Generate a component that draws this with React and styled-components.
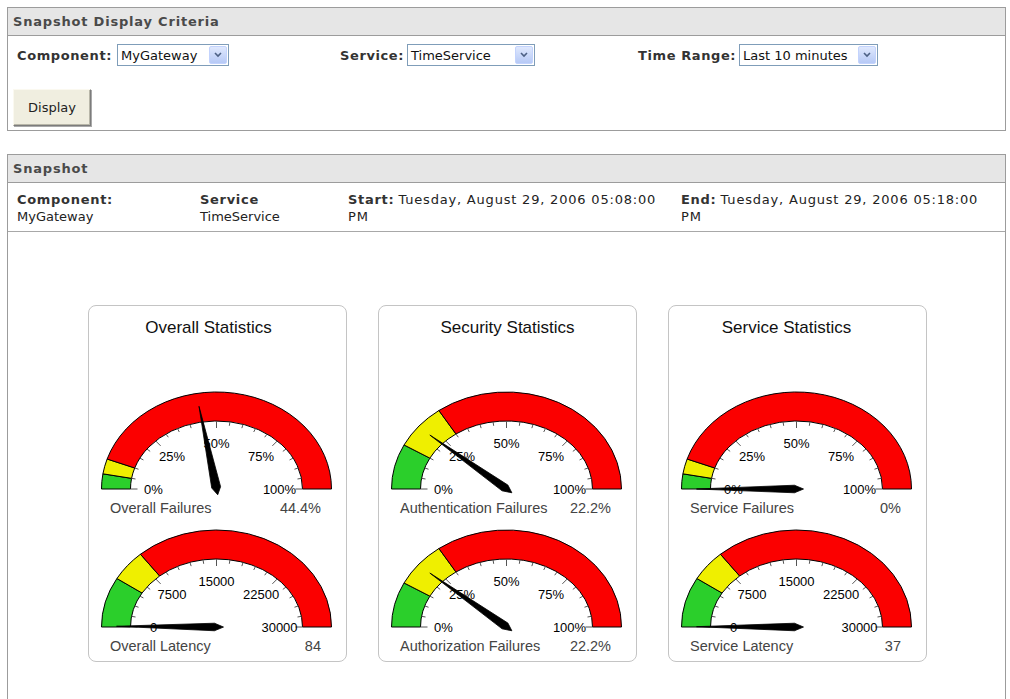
import React from 'react'
import styled, { createGlobalStyle } from 'styled-components'

const GlobalStyle = createGlobalStyle`
  body {
    margin: 0;
    background: #fff;
    font-family: Verdana, "DejaVu Sans", sans-serif;
    color: #222;
  }
  b {
    letter-spacing: 0.7px;
  }
`

const Page = styled.div`
  padding: 7px 0 0 7px;
  width: 999px;
`

const Panel = styled.section`
  border: 1px solid #9c9c9c;
  margin-top: ${p => p.$top || 0}px;
`

const PanelHeader = styled.div`
  height: 27px;
  line-height: 27px;
  background: #e6e6e6;
  border-bottom: 1px solid #9c9c9c;
  padding-left: 5px;
  font-size: 13px;
  font-weight: bold;
  letter-spacing: 0.8px;
  color: #4a4a4a;
`

const CriteriaBody = styled.div`
  padding: 8px 0 4px 5px;
`

const CriteriaRow = styled.div`
  display: flex;
  align-items: center;
  height: 22px;
  padding-left: 4px;
  margin-bottom: 23px;
`

const Field = styled.div`
  display: flex;
  align-items: center;
  gap: 5px;
  width: ${p => (p.$width ? `${p.$width}px` : 'auto')};
`

const Label = styled.span`
  width: ${p => p.$width}px;
  font-size: 13px;
  font-weight: bold;
  letter-spacing: 0.6px;
  white-space: nowrap;
  color: #333;
`

const SelectBox = styled.div`
  box-sizing: border-box;
  width: ${p => p.$width}px;
  height: 22px;
  border: 1px solid #7f9db9;
  display: flex;
  align-items: center;
  justify-content: space-between;
  padding: 0 1px 0 3px;
  font-size: 13px;
  color: #111;
  background: #fff;
`

const SelectArrow = styled.span`
  box-sizing: border-box;
  width: 18px;
  height: 18px;
  border: 1px solid #c3d3fd;
  border-radius: 2px;
  background: linear-gradient(#dfe8fd, #b6c9f6);
  display: flex;
  align-items: center;
  justify-content: center;
`

const Button = styled.button`
  box-sizing: border-box;
  width: 78px;
  height: 37px;
  background: #f0eee0;
  border: 1px solid;
  border-color: #fbf9f0 #7c7c7c #7c7c7c #fbf9f0;
  box-shadow: 1px 1px 0 #a9a9a9, inset -1px -1px 0 #b8b6a8;
  font-family: Verdana, "DejaVu Sans", sans-serif;
  font-size: 13px;
  color: #222;
  padding: 0;
  display: block;
`

const InfoRow = styled.div`
  display: grid;
  grid-template-columns: 183px 148px 333px 1fr;
  padding: 8px 0 6px 9px;
  border-bottom: 1px solid #a8a8a8;
  font-size: 13px;
  line-height: 17px;
  color: #222;
`

const InfoCell = styled.div`
  max-width: ${p => (p.$max ? `${p.$max}px` : 'none')};
  b {
    color: #333;
  }
`

const DateText = styled.span`
  letter-spacing: 0.8px;
`

const GaugeArea = styled.div`
  display: flex;
  justify-content: center;
  gap: 31px;
  padding: 73px 0 40px 2px;
`

const Card = styled.div`
  box-sizing: border-box;
  width: 259px;
  border: 1px solid #c4c4c4;
  border-radius: 8px;
  padding: 12px 0 6px;
  font-family: Arial, "Liberation Sans", sans-serif;
`

const CardTitle = styled.div`
  height: 20px;
  line-height: 20px;
  margin-bottom: 41px;
  text-align: center;
  font-size: 17px;
  color: #111;
  padding-right: ${p => p.$nudge || 0}px;
`

const Caption = styled.div`
  display: flex;
  justify-content: space-between;
  height: 17px;
  line-height: 17px;
  padding: 0 25px 0 21px;
  font-size: 14.5px;
  color: #444;
`

const CX = 127.5
const CY = 110
const OUT = [115, 97]
const IN = [86, 68]

const pt = (rx, ry, deg) => {
  const a = (deg * Math.PI) / 180
  return [CX + rx * Math.cos(a), CY - ry * Math.sin(a)]
}

const deg = f => 180 - f * 180

const band = (f1, f2) => {
  const [x1, y1] = pt(OUT[0], OUT[1], deg(f1))
  const [x2, y2] = pt(OUT[0], OUT[1], deg(f2))
  const [x3, y3] = pt(IN[0], IN[1], deg(f2))
  const [x4, y4] = pt(IN[0], IN[1], deg(f1))
  return `M${x1} ${y1} A${OUT[0]} ${OUT[1]} 0 0 1 ${x2} ${y2} L${x3} ${y3} A${IN[0]} ${IN[1]} 0 0 0 ${x4} ${y4} Z`
}

const needlePoints = f => {
  const a = (deg(f) * Math.PI) / 180
  const dx = Math.cos(a)
  const dy = -Math.sin(a)
  const nx = -dy
  const ny = dx
  const P = (d, n) => `${CX + d * dx + n * nx},${CY + (d * dy + n * ny) * 0.84}`
  return [P(100, 0), P(2, 4.5), P(-7, 0), P(2, -4.5)].join(' ')
}

const Gauge = ({ green, yellow, value, labels }) => {
  const ticks = []
  for (let i = 0; i <= 20; i++) {
    const d = deg(i / 20)
    const len = i % 5 === 0 ? 7 : 4
    const [x1, y1] = pt(IN[0], IN[1], d)
    const [x2, y2] = pt(IN[0] - len, IN[1] - len, d)
    ticks.push(<line key={i} x1={x1} y1={y1} x2={x2} y2={y2} stroke="#555" strokeWidth="1" />)
  }
  return (
    <svg width="257" height="121" viewBox="0 0 257 121" style={{ display: 'block' }}>
      <path d={band(0, green)} fill="#2bcf2b" stroke="#000" strokeWidth="1" />
      <path d={band(green, yellow)} fill="#efef00" stroke="#000" strokeWidth="1" />
      <path d={band(yellow, 1)} fill="#fb0000" stroke="#000" strokeWidth="1" />
      {ticks}
      {labels.map((t, i) => {
        const [x, y] = pt(63, 46, deg(i / 4))
        return (
          <text key={t} x={x} y={y + 4.5} textAnchor="middle" fontSize="13" fontFamily="Arial, 'Liberation Sans', sans-serif" fill="#000">
            {t}
          </text>
        )
      })}
      <polygon points={needlePoints(value)} fill="#000" stroke="#000" strokeWidth="0.8" strokeLinejoin="round" />
    </svg>
  )
}

const PCT = ['0%', '25%', '50%', '75%', '100%']
const LAT = ['0', '7500', '15000', '22500', '30000']

const ChevronDown = () => (
  <svg width="10" height="8" viewBox="0 0 10 8">
    <polyline points="2,2 5,5 8,2" fill="none" stroke="#4d6185" strokeWidth="1.6" />
  </svg>
)

const Select = ({ value, width }) => (
  <SelectBox $width={width}>
    <span>{value}</span>
    <SelectArrow>
      <ChevronDown />
    </SelectArrow>
  </SelectBox>
)

const cards = [
  {
    title: 'Overall Statistics',
    nudge: 18,
    gauges: [
      { name: 'Overall Failures', shown: '44.4%', value: 0.444, green: 0.05, yellow: 0.1, labels: PCT },
      { name: 'Overall Latency', shown: '84', value: 84 / 30000, green: 1 / 6, yellow: 0.27, labels: LAT },
    ],
  },
  {
    title: 'Security Statistics',
    nudge: 0,
    gauges: [
      { name: 'Authentication Failures', shown: '22.2%', value: 0.222, green: 0.15, yellow: 0.3, labels: PCT },
      { name: 'Authorization Failures', shown: '22.2%', value: 0.222, green: 0.15, yellow: 0.3, labels: PCT },
    ],
  },
  {
    title: 'Service Statistics',
    nudge: 22,
    gauges: [
      { name: 'Service Failures', shown: '0%', value: 0, green: 0.05, yellow: 0.1, labels: PCT },
      { name: 'Service Latency', shown: '37', value: 37 / 30000, green: 1 / 6, yellow: 0.27, labels: LAT },
    ],
  },
]

export default function App() {
  return (
    <Page>
      <GlobalStyle />
      <Panel>
        <PanelHeader>Snapshot Display Criteria</PanelHeader>
        <CriteriaBody>
          <CriteriaRow>
            <Field $width={323}>
              <Label $width={95}>Component:</Label>
              <Select value="MyGateway" width={112} />
            </Field>
            <Field $width={298}>
              <Label $width={62}>Service:</Label>
              <Select value="TimeService" width={128} />
            </Field>
            <Field>
              <Label $width={96}>Time Range:</Label>
              <Select value="Last 10 minutes" width={139} />
            </Field>
          </CriteriaRow>
          <Button>Display</Button>
        </CriteriaBody>
      </Panel>

      <Panel $top={23}>
        <PanelHeader>Snapshot</PanelHeader>
        <InfoRow>
          <InfoCell>
            <b>Component:</b>
            <div>MyGateway</div>
          </InfoCell>
          <InfoCell>
            <b>Service</b>
            <div>TimeService</div>
          </InfoCell>
          <InfoCell $max={318}>
            <b>Start:</b> <DateText>Tuesday, August 29, 2006 05:08:00 PM</DateText>
          </InfoCell>
          <InfoCell $max={318}>
            <b>End:</b> <DateText>Tuesday, August 29, 2006 05:18:00 PM</DateText>
          </InfoCell>
        </InfoRow>
        <GaugeArea>
          {cards.map(c => (
            <Card key={c.title}>
              <CardTitle $nudge={c.nudge}>{c.title}</CardTitle>
              {c.gauges.map(g => (
                <div key={g.name}>
                  <Gauge green={g.green} yellow={g.yellow} value={g.value} labels={g.labels} />
                  <Caption>
                    <span>{g.name}</span>
                    <span>{g.shown}</span>
                  </Caption>
                </div>
              ))}
            </Card>
          ))}
        </GaugeArea>
      </Panel>
    </Page>
  )
}
